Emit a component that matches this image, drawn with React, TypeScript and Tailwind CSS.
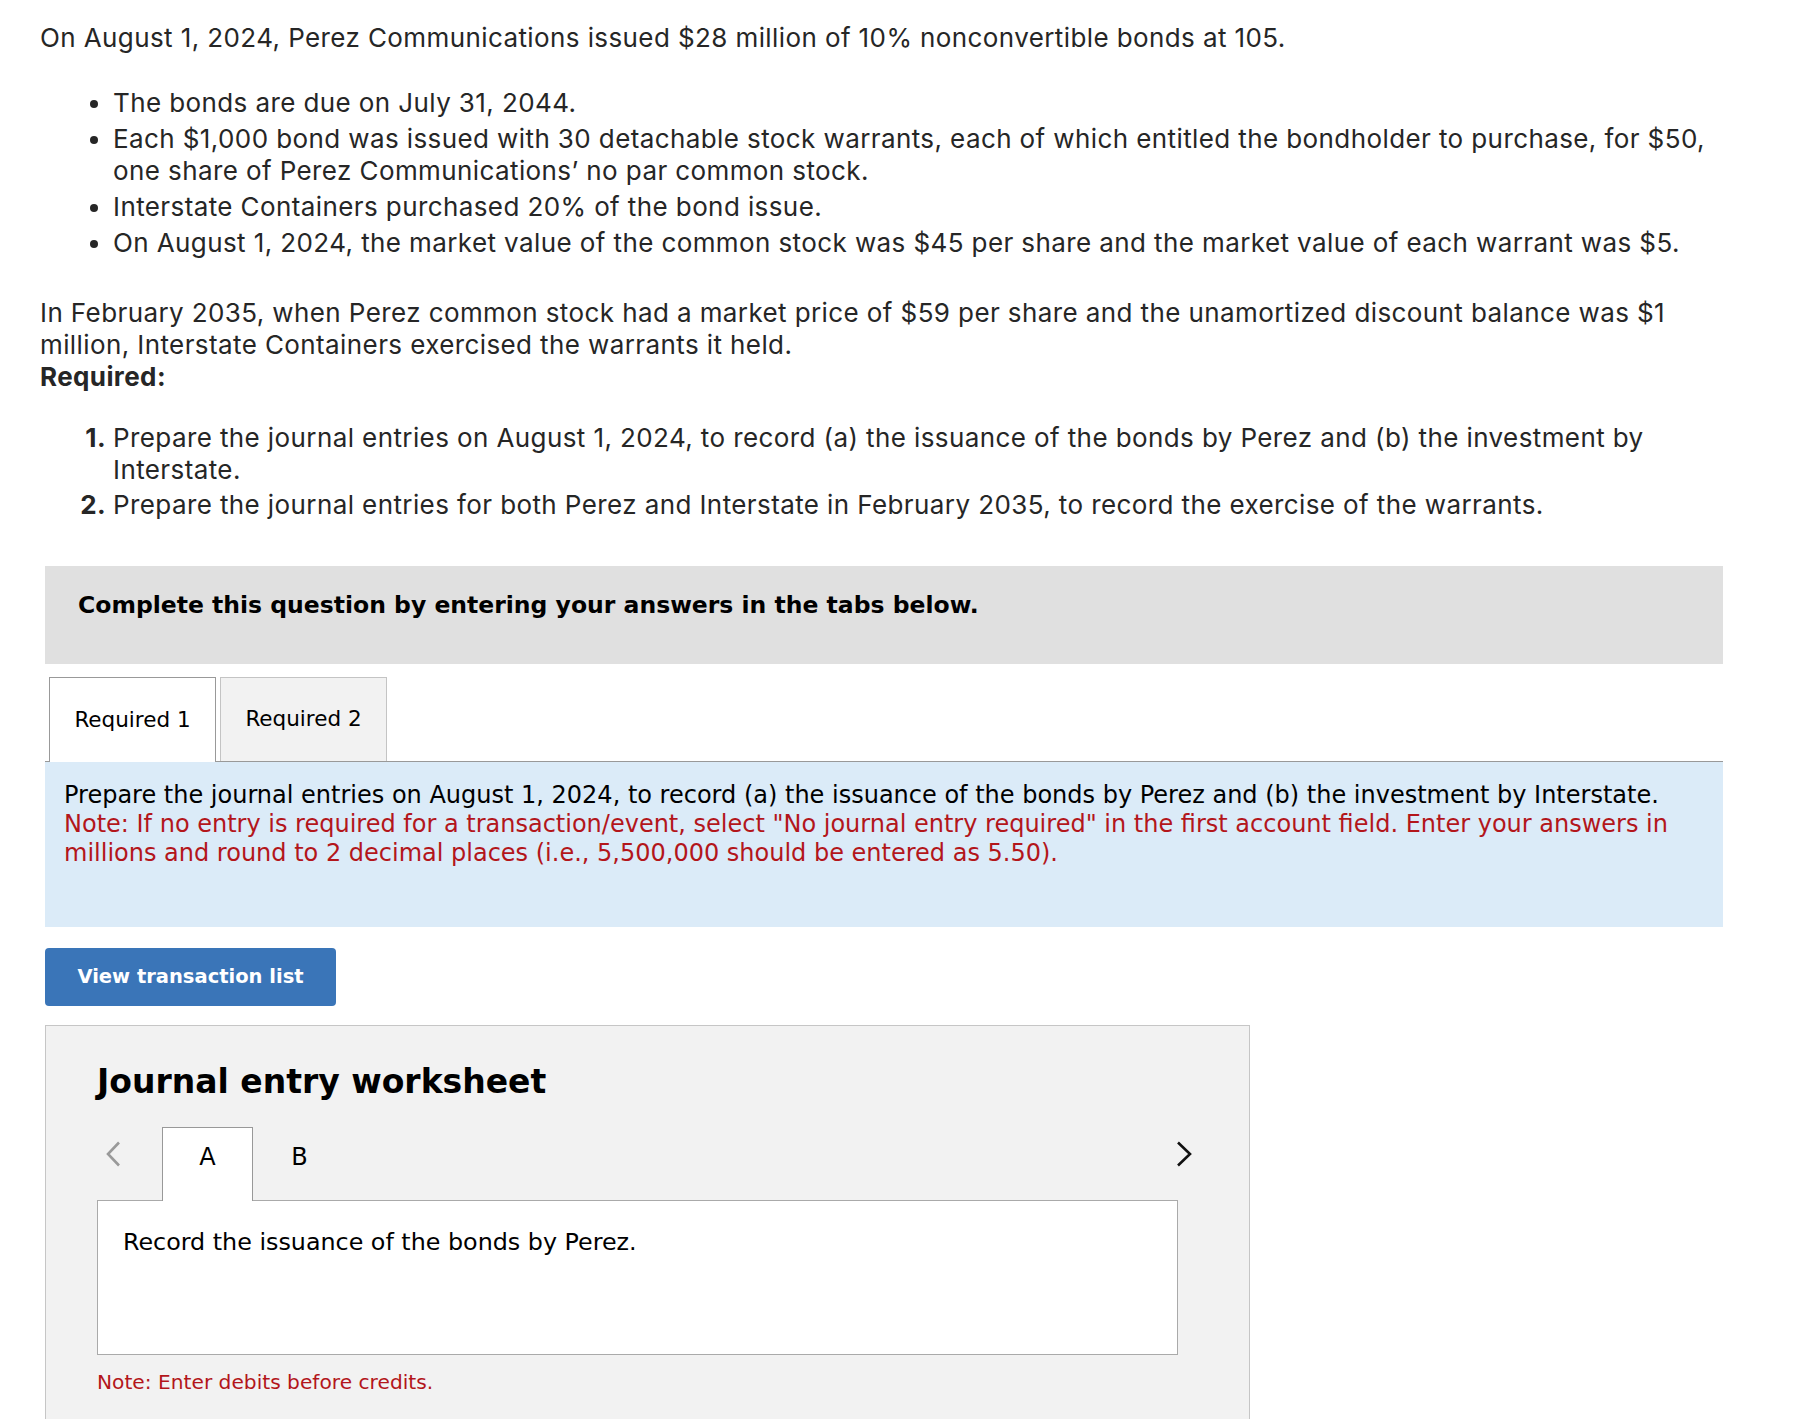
import React from "react";

const bullets = [
  "The bonds are due on July 31, 2044.",
  "Each $1,000 bond was issued with 30 detachable stock warrants, each of which entitled the bondholder to purchase, for $50, one share of Perez Communications’ no par common stock.",
  "Interstate Containers purchased 20% of the bond issue.",
  "On August 1, 2024, the market value of the common stock was $45 per share and the market value of each warrant was $5.",
];

const steps = [
  "Prepare the journal entries on August 1, 2024, to record (a) the issuance of the bonds by Perez and (b) the investment by Interstate.",
  "Prepare the journal entries for both Perez and Interstate in February 2035, to record the exercise of the warrants.",
];

const ChevronLeft = () => (
  <svg width="16" height="26" viewBox="0 0 16 26" fill="none">
    <polyline points="14,1.5 3,13 14,24.5" stroke="#9a9a9a" strokeWidth="2.6" />
  </svg>
);

const ChevronRight = () => (
  <svg width="18" height="26" viewBox="0 0 18 26" fill="none">
    <polyline points="2,1.5 14,13 2,24.5" stroke="#111" strokeWidth="2.6" />
  </svg>
);

export default function App() {
  return (
    <div className="min-h-screen bg-white pl-[40px] pr-[94px] pt-[22px] pb-[10px] text-[#262626] font-['Inter',sans-serif] tracking-[0.4px]">
      <p className="text-[26px] leading-[32px]">
        On August 1, 2024, Perez Communications issued $28 million of 10% nonconvertible bonds at 105.
      </p>

      <ul className="mt-[33px] list-disc pl-[73px] text-[26px] leading-[32px]">
        {bullets.map((b) => (
          <li key={b} className="mb-[4px]">
            {b}
          </li>
        ))}
      </ul>

      <div className="mt-[38px] text-[26px] leading-[32px]">
        <p>
          In February 2035, when Perez common stock had a market price of $59 per share and the unamortized discount balance was $1 million, Interstate Containers exercised the warrants it held.
        </p>
        <p className="font-bold">Required:</p>
      </div>

      <ol className="mt-[29px] text-[26px] leading-[32px]">
        {steps.map((s, i) => (
          <li key={s} className="mb-[3px] flex">
            <span className="w-[73px] shrink-0 pr-[7px] text-right font-bold">{i + 1}.</span>
            <span>{s}</span>
          </li>
        ))}
      </ol>

      <div className="font-['DejaVu_Sans',Verdana,sans-serif] tracking-normal">
        <div className="ml-[5px] mt-[45px] h-[98px] bg-[#e0e0e0] pl-[33px] pt-[25px] text-[23.5px] font-bold leading-[29px] text-black">
          Complete this question by entering your answers in the tabs below.
        </div>

        <div className="ml-[5px] mt-[13px]">
          <div className="flex h-[84px] items-start gap-[4px] pl-[4px]">
            <div className="relative z-10 flex h-[85px] w-[167px] items-center justify-center border border-b-0 border-[#999] bg-white text-[21.5px] text-black">
              Required 1
            </div>
            <div className="flex h-[84px] w-[167px] items-center justify-center border border-b-0 border-[#c4c4c4] bg-[#f2f2f2] text-[21.5px] text-black">
              Required 2
            </div>
          </div>
          <div className="border-t border-[#999] bg-[#dbebf8] pb-[59px] pl-[19px] pr-[19px] pt-[19px] text-[24px] leading-[29px]">
            <p className="text-black">
              Prepare the journal entries on August 1, 2024, to record (a) the issuance of the bonds by Perez and (b) the investment by Interstate.
            </p>
            <p className="text-[#b3161b]">
              Note: If no entry is required for a transaction/event, select "No journal entry required" in the first account field. Enter your answers in millions and round to 2 decimal places (i.e., 5,500,000 should be entered as 5.50).
            </p>
          </div>
        </div>

        <button className="ml-[5px] mt-[21px] flex h-[58px] w-[291px] items-center justify-center rounded-[4px] bg-[#3a75b8] text-[19.5px] font-bold text-white">
          View transaction list
        </button>

        <div className="ml-[5px] mt-[19px] w-[1205px] border border-[#c6c6c6] bg-[#f2f2f2] pb-[60px] pl-[51px] pt-[36px]">
          <h2 className="text-[33px] font-bold leading-[40px] text-black">Journal entry worksheet</h2>

          <div className="mt-[25px] flex h-[73px] w-[1100px] items-start">
            <div className="w-[65px] pl-[8px] pt-[14px]">
              <ChevronLeft />
            </div>
            <div className="relative z-10 h-[74px] w-[91px] border border-b-0 border-[#999] bg-white pt-[14px] text-center text-[24px] leading-[30px] text-black">
              A
            </div>
            <div className="w-[93px] pt-[15px] text-center text-[24px] leading-[30px] text-black">B</div>
            <div className="flex-1" />
            <div className="pr-[3px] pt-[14px]">
              <ChevronRight />
            </div>
          </div>

          <div className="h-[155px] w-[1081px] border border-[#aaa] bg-white pl-[25px] pt-[27px] text-[23.8px] leading-[29px] text-black">
            Record the issuance of the bonds by Perez.
          </div>

          <p className="mt-[15px] text-[20.2px] leading-[24px] text-[#b3161b]">Note: Enter debits before credits.</p>
        </div>
      </div>
    </div>
  );
}
